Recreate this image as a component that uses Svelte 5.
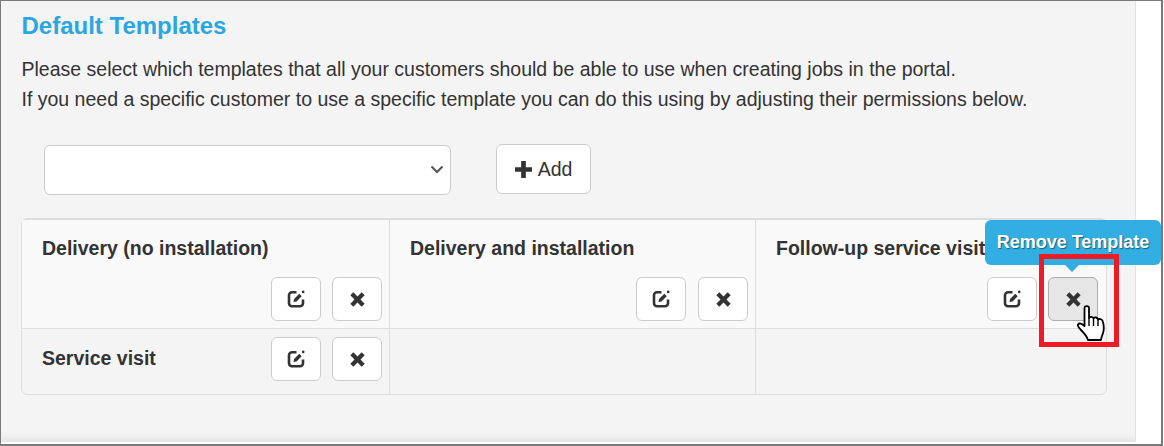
<script>
  const rows = [
    [{ name: "Delivery (no installation)" }, { name: "Delivery and installation" }, { name: "Follow-up service visit", hover: true }],
    [{ name: "Service visit", inline: true }, {}, {}],
  ];
</script>

<div class="frame">
  <main class="panel">
    <h2>Default Templates</h2>
    <p>
      Please select which templates that all your customers should be able to use when creating jobs in the portal.<br />
      If you need a specific customer to use a specific template you can do this using by adjusting their permissions below.
    </p>

    <div class="add-row">
      <div class="select-wrap">
        <select aria-label="Template"><option></option></select>
        <svg class="chevron" viewBox="0 0 14 9"><path d="M1.500 1.500 7 7l5.500-5.500" /></svg>
      </div>
      <button class="btn add">
        <svg class="plus" viewBox="0 0 16 16"><path d="M5.800 0h4.400v5.800H16v4.400h-5.800V16H5.800v-5.800H0V5.800h5.800z" /></svg>
        Add
      </button>
    </div>

    <div class="table">
      {#each rows as row, r}
        <div class="row" class:striped={r === 0}>
          {#each row as cell}
            <div class="cell" class:inline={cell.inline}>
              {#if cell.name}
                <strong>{cell.name}</strong>
                <div class="actions">
                  <button class="btn icon" aria-label="Edit">
                    <svg viewBox="0 0 18 18" class="edit">
                      <path d="M9.500 2.300H5A3 3 0 0 0 2 5.300v8a3 3 0 0 0 3 3h8a3 3 0 0 0 3-3V9.500" fill="none" stroke="currentColor" stroke-width="2.600" />
                      <path d="M6.500 12l.6-3 5.200-5.200 2.400 2.400-5.200 5.200z" />
                      <circle cx="16.200" cy="1.900" r="1.300" />
                    </svg>
                  </button>
                  <button class="btn icon" class:pressed={cell.hover} aria-label="Remove">
                    <svg viewBox="0 0 14 14" class="cross"><path d="M3.100.3 7 4.200 10.900.3l2.800 2.800L9.800 7l3.900 3.900-2.800 2.800L7 9.800l-3.900 3.900-2.800-2.800L4.200 7 .3 3.100z" /></svg>
                  </button>
                </div>
              {/if}
            </div>
          {/each}
        </div>
      {/each}
    </div>

    <div class="tooltip">Remove Template</div>
    <div class="highlight"></div>
    <svg class="cursor" viewBox="0 0 29 36">
      <path d="M7.500 3C7.500.5 12 .5 12 3v10c1-1.500 4-1.500 4.500.5 1-1.500 4-1.500 4.500 1 1.500-1 4.500-.5 5 2.500 1 4 1 8 0 11-.5 2-1.500 3-2 7H11c-1-4-4-7-7-10-2-2-4-4-3-5.500 1-1.500 3.500-1.500 6.500 1.500z" fill="#fff" stroke="#000" stroke-width="1.800" stroke-linejoin="round" />
      <path d="M12 13v8M16.500 13.500V21M21 14.500V21" fill="none" stroke="#000" stroke-width="1.400" />
    </svg>
  </main>
  <aside class="gutter"></aside>
</div>

<style>
  :global(body) {
    margin: 0;
    background: #fff;
  }
  .frame {
    box-sizing: border-box;
    width: 1163px;
    height: 446px;
    display: flex;
    border: 1px solid #7a7a7a;
    border-width: 1px 2px 2px 1px;
    font-family: "Liberation Sans", Arial, sans-serif;
    color: #333;
  }
  .panel {
    position: relative;
    box-sizing: border-box;
    width: 1135px;
    height: 441px;
    padding: 11px 20px 0 20px;
    background: #f4f4f4;
    border-right: 1px solid #e2e2e2;
    box-shadow: inset 0 -10px 8px -8px #dedede;
  }
  .gutter {
    flex: 1;
  }
  h2 {
    margin: 0 0 14px;
    padding-left: 0.5px;
    font-size: 24px;
    line-height: 28px;
    font-weight: 700;
    color: #2aa6e0;
  }
  p {
    margin: 0;
    padding-left: 0.5px;
    font-size: 19.5px;
    line-height: 30px;
  }
  .add-row {
    display: flex;
    align-items: flex-start;
    gap: 45px;
    margin: 30px 0 23px 23px;
  }
  .select-wrap {
    position: relative;
    margin-top: 1px;
  }
  select {
    display: block;
    box-sizing: border-box;
    width: 407px;
    height: 50px;
    appearance: none;
    background: #fff;
    border: 1px solid #ccc;
    border-radius: 6px;
    color: #444;
  }
  .chevron {
    position: absolute;
    right: 7px;
    top: 20px;
    width: 14px;
    height: 9px;
    fill: none;
    stroke: #555;
    stroke-width: 2;
    pointer-events: none;
  }
  .btn {
    box-sizing: border-box;
    display: inline-flex;
    align-items: center;
    justify-content: center;
    background: #fff;
    border: 1px solid #ccc;
    border-radius: 6px;
    padding: 0;
    color: #333;
    font-family: inherit;
    cursor: pointer;
  }
  .add {
    width: 95px;
    height: 50px;
    gap: 6px;
    font-size: 19.5px;
  }
  .plus {
    width: 17px;
    height: 17px;
    fill: #333;
  }
  .table {
    box-sizing: border-box;
    width: 1086px;
    border: 1px solid #ddd;
    border-top-width: 2px;
    border-radius: 6px;
  }
  .row {
    display: grid;
    grid-template-columns: 368px 366px 1fr;
    height: 65px;
  }
  .row.striped {
    height: 109px;
    background: #f9f9f9;
    border-bottom: 1px solid #ddd;
    box-sizing: border-box;
  }
  .cell {
    box-sizing: border-box;
    border-right: 1px solid #ddd;
    padding: 17px 7px 0 20px;
    font-size: 19.5px;
    line-height: 22px;
    display: flex;
    flex-direction: column;
  }
  .cell:nth-child(2) .actions {
    gap: 12px;
  }
  .cell:last-child {
    border-right: 0;
    padding-right: 8px;
  }
  .cell.inline {
    flex-direction: row;
    justify-content: space-between;
    padding-top: 18px;
  }
  .actions {
    display: flex;
    justify-content: flex-end;
    gap: 11px;
    margin-top: 18px;
  }
  .inline .actions {
    margin-top: -10px;
  }
  .icon {
    width: 50px;
    height: 44px;
  }
  .icon.pressed {
    background: #e6e6e6;
    border-color: #adadad;
  }
  .edit {
    width: 18px;
    height: 18px;
    fill: #333;
    color: #333;
  }
  .cross {
    width: 15px;
    height: 15px;
    fill: #333;
  }
  .tooltip {
    position: absolute;
    left: 984px;
    top: 219px;
    width: 176px;
    height: 45px;
    display: flex;
    align-items: center;
    justify-content: center;
    background: #33aee2;
    border-radius: 6px;
    color: #fff;
    font-size: 18px;
    font-weight: 700;
    text-shadow: 1px 1px 1px rgba(0, 0, 0, 0.45);
  }
  .tooltip::after {
    content: "";
    position: absolute;
    left: 80px;
    bottom: -7px;
    border: 7px solid transparent;
    border-bottom: 0;
    border-top-color: #33aee2;
  }
  .highlight {
    position: absolute;
    left: 1038px;
    top: 253px;
    width: 80px;
    height: 93px;
    box-sizing: border-box;
    border: 5px solid #ed1c24;
  }
  .cursor {
    position: absolute;
    left: 1076px;
    top: 304px;
    width: 29px;
    height: 36px;
  }
</style>
